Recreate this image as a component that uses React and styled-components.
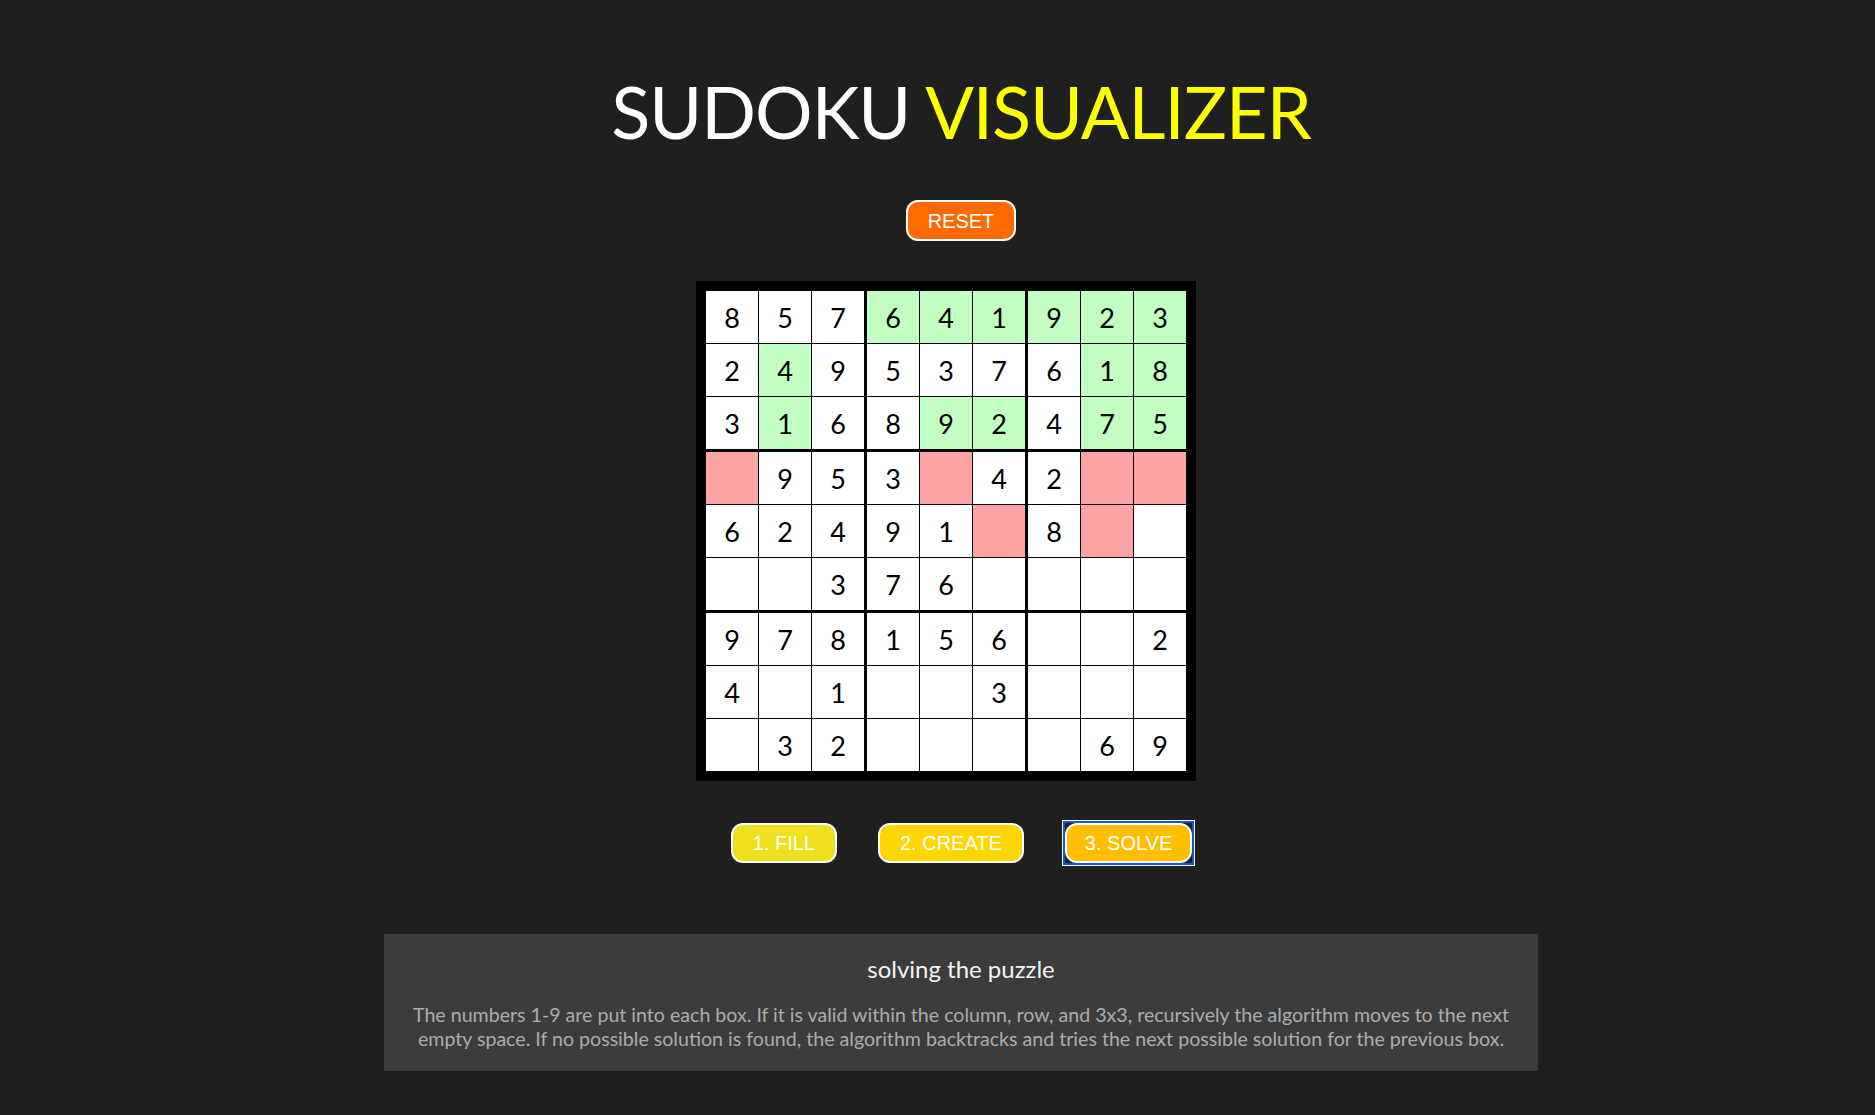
import React from "react";
import styled, { createGlobalStyle } from "styled-components";

const GlobalStyle = createGlobalStyle`
  body {
    margin: 0;
    background-color: #1f1f1f;
    font-family: "Lato", "Open Sans", sans-serif;
  }
`;

// puzzle state as captured: value + cell status (g = placed ok, r = conflict)
const ROWS = [
  ["8", "5", "7", "6g", "4g", "1g", "9g", "2g", "3g"],
  ["2", "4g", "9", "5", "3", "7", "6", "1g", "8g"],
  ["3", "1g", "6", "8", "9g", "2g", "4", "7g", "5g"],
  ["r", "9", "5", "3", "r", "4", "2", "r", "r"],
  ["6", "2", "4", "9", "1", "r", "8", "r", ""],
  ["", "", "3", "7", "6", "", "", "", ""],
  ["9", "7", "8", "1", "5", "6", "", "", "2"],
  ["4", "", "1", "", "", "3", "", "", ""],
  ["", "3", "2", "", "", "", "", "6", "9"],
];

const parse = (raw) => {
  const status = raw.endsWith("g") ? "g" : raw.endsWith("r") ? "r" : "";
  const value = raw.replace(/[gr]/g, "");
  return { value, status };
};

const boxCells = (b) => {
  const r0 = Math.floor(b / 3) * 3;
  const c0 = (b % 3) * 3;
  const out = [];
  for (let r = r0; r < r0 + 3; r++) {
    for (let c = c0; c < c0 + 3; c++) {
      out.push(parse(ROWS[r][c]));
    }
  }
  return out;
};

const App = () => {
  return (
    <Page>
      <GlobalStyle />
      <Title>
        SUDOKU <span>VISUALIZER</span>
      </Title>

      <ResetButton type="button">RESET</ResetButton>

      <BoardRow>
        <Board>
          {Array.from({ length: 9 }, (_, b) => (
            <Box key={b}>
              {boxCells(b).map((cell, i) => (
                <Cell key={i} status={cell.status}>
                  {cell.value}
                </Cell>
              ))}
            </Box>
          ))}
        </Board>
      </BoardRow>

      <Controls>
        <StepButton type="button" color="#efe01d">
          1. FILL
        </StepButton>
        <StepButton type="button" color="#ffd600">
          2. CREATE
        </StepButton>
        <FocusRing>
          <StepButton type="button" color="#ffbf00" pad={18}>
            3. SOLVE
          </StepButton>
        </FocusRing>
      </Controls>

      <InfoPanel>
        <InfoTitle>solving the puzzle</InfoTitle>
        <InfoText>
          The numbers 1-9 are put into each box. If it is valid within the
          column, row, and 3x3, recursively the algorithm moves to the next
          empty space. If no possible solution is found, the algorithm
          backtracks and tries the next possible solution for the previous box.
        </InfoText>
      </InfoPanel>
    </Page>
  );
};

export default App;

const Page = styled.div`
  display: flex;
  flex-direction: column;
  align-items: center;
  padding: 68px 0 44px 47px;
`;

const Title = styled.h1`
  margin: 0;
  font-family: "Lato", sans-serif;
  font-size: 72px;
  font-weight: 400;
  letter-spacing: -1px;
  line-height: normal;
  color: #ffffff;

  span {
    color: #ffff00;
  }
`;

const ResetButton = styled.button`
  margin-top: 46px;
  height: 41px;
  padding: 0 20px;
  border: 2px solid #ffffff;
  border-radius: 12px;
  background-color: #ff6a00;
  color: #ffffff;
  font-family: "Liberation Sans", Arial, sans-serif;
  font-size: 20px;
  line-height: 24px;
  cursor: pointer;
`;

const BoardRow = styled.div`
  margin-top: 40px;
  display: flex;
  justify-content: center;
`;

const Board = styled.div`
  display: grid;
  grid-template-columns: repeat(3, auto);
  gap: 3px;
  padding: 10px;
  margin-right: 30px;
  background-color: #000000;
`;

const Box = styled.div`
  display: grid;
  grid-template-columns: repeat(3, 52px);
  grid-auto-rows: 52px;
  gap: 1px;
  background-color: #000000;
`;

const Cell = styled.div`
  display: flex;
  align-items: center;
  justify-content: center;
  background-color: ${(props) =>
    props.status === "g" ? "#c2fdc2" : props.status === "r" ? "#fea3a3" : "#ffffff"};
  color: #000000;
  font-family: "Lato", sans-serif;
  font-size: 27px;
`;

const Controls = styled.div`
  margin-top: 40px;
  display: flex;
  align-items: center;
  gap: 41px;
`;

const StepButton = styled.button`
  height: 40px;
  padding: 0 ${(props) => props.pad || 20}px;
  border: 2px solid #ffffff;
  border-radius: 12px;
  background-color: ${(props) => props.color};
  color: #ffffff;
  font-family: "Liberation Sans", Arial, sans-serif;
  font-size: 20px;
  line-height: 24px;
  cursor: pointer;
`;

/* square keyboard-focus outline around the active step */
const FocusRing = styled.span`
  display: inline-flex;
  margin: 0 -3px 0 -2px;
  border: 2px solid #0d5bd1;
  box-shadow: 0 0 0 1px #ffffff;
`;

const InfoPanel = styled.div`
  margin-top: 69px;
  width: 1154px;
  box-sizing: border-box;
  padding: 20px 16px 20px;
  background-color: #3c3c3c;
  text-align: center;
`;

const InfoTitle = styled.h3`
  margin: 0;
  font-family: "Lato", sans-serif;
  font-size: 24px;
  font-weight: 400;
  line-height: normal;
  color: #f4f4f4;
`;

const InfoText = styled.p`
  margin: 20px 0 0;
  font-family: "Lato", sans-serif;
  font-size: 19.6px;
  line-height: 24px;
  color: #acacac;
`;
